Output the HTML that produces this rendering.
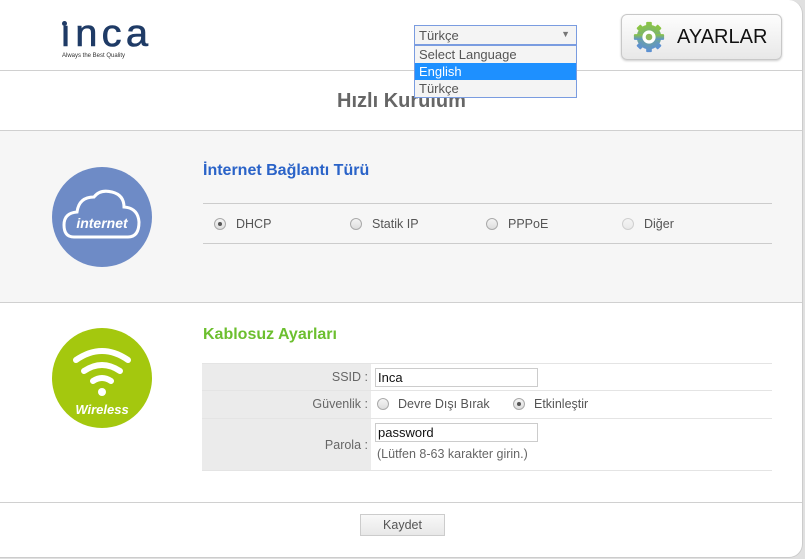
<!DOCTYPE html>
<html><head><meta charset="utf-8"><style>
*{box-sizing:border-box;margin:0;padding:0}
body{width:805px;height:559px;background:#e0e0e0;font-family:"Liberation Sans","Noto Sans CJK SC",sans-serif;font-size:12px;color:#666;position:relative;overflow:hidden}
.card{position:absolute;left:0;top:0;width:803px;height:558px;background:#fff;border-right:1px solid #ccc;border-bottom:1px solid #ccc;border-radius:0 14px 14px 0;overflow:hidden}
.abs{position:absolute}
.hl{position:absolute;left:0;width:803px;height:1px;background:#d0d0d0}
.radio{position:absolute;width:12px;height:12px;border-radius:50%;border:1px solid #aaa;background:linear-gradient(#f4f4f4,#ddd)}
.radio.on::after{content:"";position:absolute;left:3px;top:3px;width:4px;height:4px;border-radius:50%;background:#555}
.lbl{position:absolute;font-size:12.5px;color:#555}
</style></head><body>
<div class="card">
 <div class="abs" style="left:60px;top:15px;font-size:38px;line-height:38px;color:#1f3b66;font-family:'Liberation Sans',sans-serif;letter-spacing:4px;transform:scaleX(1.05);transform-origin:left;-webkit-text-stroke:0.6px #1f3b66">ınca</div>
 <div class="abs" style="left:62px;top:21px;width:5px;height:5px;border-radius:50%;background:#1f3b66"></div>
 <div class="abs" style="left:62px;top:53px;font-size:6px;color:#333">Always the Best Quality</div>
 <div class="abs" style="left:621px;top:14px;width:161px;height:46px;border:1px solid #c8c8c8;border-radius:6px;background:linear-gradient(#fdfdfd,#e8e8e8);box-shadow:0 1px 2px #ccc"></div>
 <svg class="abs" style="left:632px;top:20px" width="34" height="34" viewBox="0 0 36 36">
  <defs><linearGradient id="g" x1="0" y1="0" x2="0" y2="1"><stop offset="0" stop-color="#8cc63f"/><stop offset="1" stop-color="#5b8fd6"/></linearGradient></defs>
  <g fill="url(#g)"><circle cx="18" cy="18" r="13"/>
  <rect x="15" y="2" width="6" height="32" rx="1"/><rect x="2" y="15" width="32" height="6" rx="1"/>
  <rect x="15" y="2" width="6" height="32" rx="1" transform="rotate(45 18 18)"/><rect x="15" y="2" width="6" height="32" rx="1" transform="rotate(-45 18 18)"/></g>
  <circle cx="18" cy="18" r="7" fill="#fff"/><circle cx="18" cy="18" r="3.5" fill="#8fb85a"/>
 </svg>
 <div class="abs" style="left:677px;top:26px;font-size:20px;color:#111">AYARLAR</div>
 <div class="hl" style="top:70px"></div>
 <div class="abs" style="left:0;width:803px;top:90px;text-align:center;font-size:20px;font-weight:bold;color:#666">Hızlı Kurulum</div>
 <div class="abs" style="left:414px;top:25px;width:163px;height:20px;border:1px solid #7a9ce0;background:#f4f4f4;font-size:13px;color:#555;padding:2px 4px">Türkçe<span style="position:absolute;right:6px;top:3px;font-size:9px;color:#777">▼</span></div>
 <div class="abs" style="left:414px;top:45px;width:163px;height:53px;border:1px solid #7a9ce0;background:#f4f4f4;font-size:13px;color:#555;line-height:17px">
  <div style="padding-left:4px">Select Language</div>
  <div style="padding-left:4px;background:#1e90ff;color:#fff">English</div>
  <div style="padding-left:4px">Türkçe</div>
 </div>
 <div class="hl" style="top:130px"></div>
 <div class="abs" style="left:0;top:131px;width:803px;height:171px;background:#f6f6f6"></div>
 <div class="hl" style="top:302px"></div>
 <svg class="abs" style="left:52px;top:167px" width="100" height="100" viewBox="0 0 100 100">
  <circle cx="50" cy="50" r="50" fill="#6e8bc6"/>
  <path d="M22 70 Q12 70 12 58 Q12 46 25 45 Q27 30 42 30 Q48 22 60 25 Q72 28 72 40 Q86 41 87 55 Q87 70 76 70 Z" fill="none" stroke="#fff" stroke-width="3"/>
  <text x="50" y="61" text-anchor="middle" font-family="Liberation Sans,sans-serif" font-size="14" font-style="italic" font-weight="bold" fill="#fff">internet</text>
 </svg>
 <div class="abs" style="left:203px;top:162px;font-size:16px;font-weight:bold;color:#2a63c8">İnternet Bağlantı Türü</div>
 <div class="abs" style="left:203px;top:203px;width:569px;height:1px;background:#ccc"></div>
 <div class="abs" style="left:203px;top:243px;width:569px;height:1px;background:#ccc"></div>
 <div class="radio on" style="left:214px;top:218px"></div><div class="lbl" style="left:236px;top:217px">DHCP</div>
 <div class="radio" style="left:350px;top:218px"></div><div class="lbl" style="left:372px;top:217px">Statik IP</div>
 <div class="radio" style="left:486px;top:218px"></div><div class="lbl" style="left:508px;top:217px">PPPoE</div>
 <div class="radio" style="left:622px;top:218px;opacity:.5"></div><div class="lbl" style="left:644px;top:217px">Diğer</div>
 <svg class="abs" style="left:52px;top:328px" width="100" height="100" viewBox="0 0 100 100">
  <circle cx="50" cy="50" r="50" fill="#a4c80e"/>
  <g fill="none" stroke="#fff" stroke-width="6" stroke-linecap="round">
   <path d="M24 32 Q50 14 76 32"/><path d="M32 43 Q50 31 68 43"/><path d="M41 53 Q50 47 59 53"/></g>
  <circle cx="50" cy="64" r="4" fill="#fff"/>
  <text x="50" y="86" text-anchor="middle" font-family="Liberation Sans,sans-serif" font-size="13" font-style="italic" font-weight="bold" fill="#fff">Wireless</text>
 </svg>
 <div class="abs" style="left:203px;top:326px;font-size:16px;font-weight:bold;color:#6cbf2f">Kablosuz Ayarları</div>
 <div class="abs" style="left:202px;top:363px;width:169px;height:107px;background:#ebebeb"></div>
 <div class="abs" style="left:202px;top:363px;width:570px;height:1px;background:#e4e4e4"></div>
 <div class="abs" style="left:202px;top:390px;width:570px;height:1px;background:#e4e4e4"></div>
 <div class="abs" style="left:202px;top:418px;width:570px;height:1px;background:#e4e4e4"></div>
 <div class="abs" style="left:202px;top:470px;width:570px;height:1px;background:#e4e4e4"></div>
 <div class="lbl" style="left:202px;width:166px;text-align:right;top:370px;color:#666">SSID :</div>
 <div class="abs" style="left:375px;top:368px;width:163px;height:19px;border:1px solid #ccc;background:#fff;font-size:13px;color:#111;padding:1px 2px">Inca</div>
 <div class="lbl" style="left:202px;width:166px;text-align:right;top:397px;color:#666">Güvenlik :</div>
 <div class="radio" style="left:377px;top:398px"></div><div class="lbl" style="left:398px;top:397px">Devre Dışı Bırak</div>
 <div class="radio on" style="left:513px;top:398px"></div><div class="lbl" style="left:534px;top:397px">Etkinleştir</div>
 <div class="lbl" style="left:202px;width:166px;text-align:right;top:438px;color:#666">Parola :</div>
 <div class="abs" style="left:375px;top:423px;width:163px;height:19px;border:1px solid #ccc;background:#fff;font-size:13px;color:#111;padding:1px 2px">password</div>
 <div class="lbl" style="left:377px;top:447px;color:#666">(Lütfen 8-63 karakter girin.)</div>
 <div class="hl" style="top:502px"></div>
 <div class="abs" style="left:360px;top:514px;width:85px;height:22px;border:1px solid #ccc;background:linear-gradient(#f8f8f8,#e8e8e8);text-align:center;font-size:12.5px;line-height:20px;color:#555">Kaydet</div>
</div>
</body></html>
